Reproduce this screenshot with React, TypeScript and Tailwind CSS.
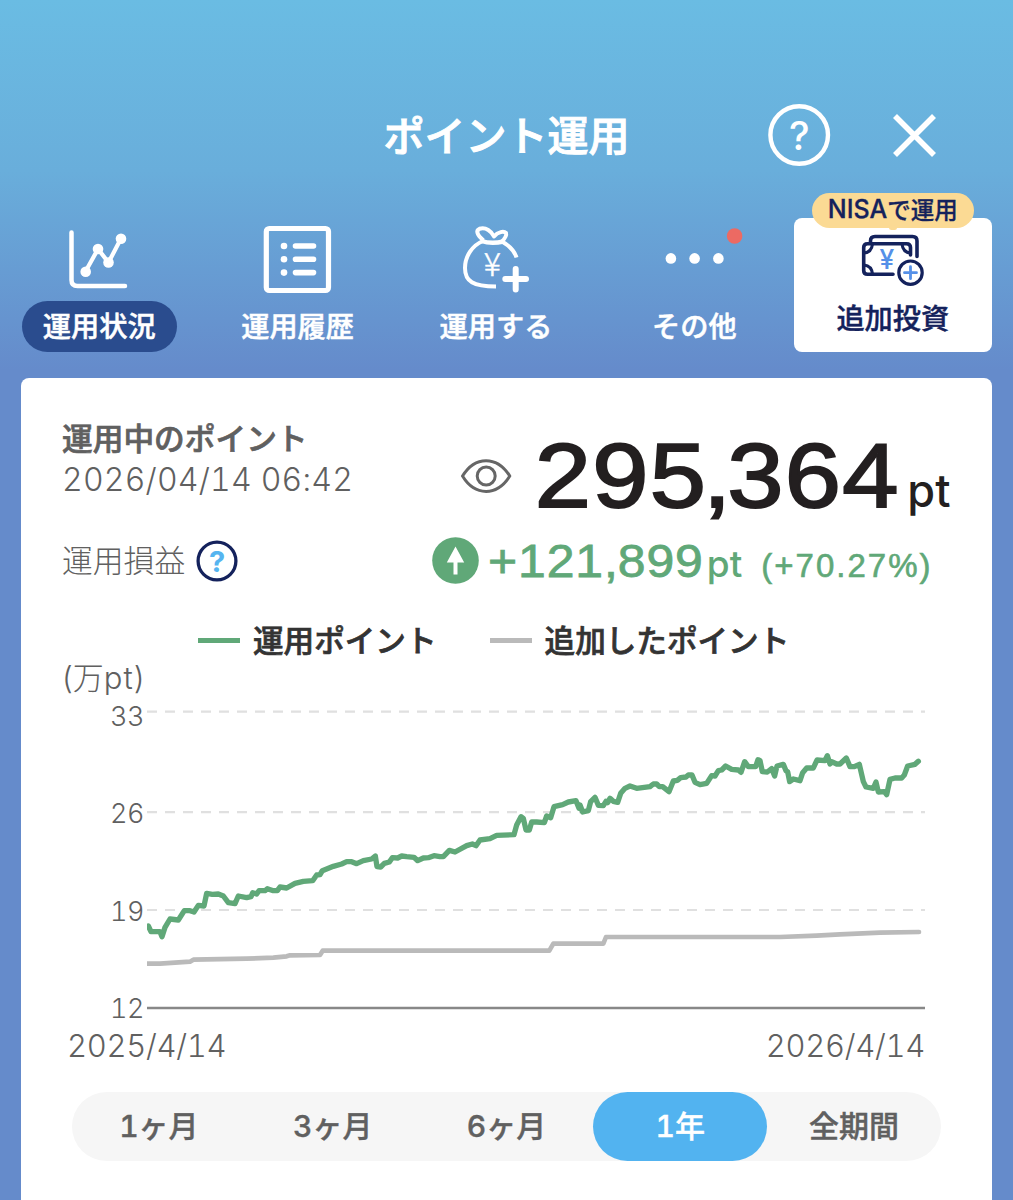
import React, { useState } from 'react';

interface NavItem {
  label: string;
  icon: React.ReactNode;
}

const ChartIcon = () => (
  <svg width="70" height="72" viewBox="64 224 70 72" fill="none" stroke="#fff" strokeLinecap="round" strokeLinejoin="round">
    <path d="M71.5 232.5V280Q71.5 286 77.5 286H125" strokeWidth="4.5" />
    <path d="M85.5 271.5L98 249L108.5 262.5L121 238.5" strokeWidth="4.2" />
    <g fill="#fff" stroke="none">
      <circle cx="85.7" cy="271.7" r="5.3" />
      <circle cx="98" cy="249" r="5.3" />
      <circle cx="108.5" cy="262.5" r="5.3" />
      <circle cx="121" cy="238.7" r="5.3" />
    </g>
  </svg>
);

const HistoryIcon = () => (
  <svg width="72" height="72" viewBox="262 224 72 72" fill="none" stroke="#fff" strokeLinecap="round">
    <rect x="266.3" y="228.5" width="62.2" height="62" rx="3" strokeWidth="5.2" />
    <path d="M295.5 246H313.5M295.5 259.3H313.5M295.5 272.6H313.5" strokeWidth="5.6" />
    <g fill="#fff" stroke="none">
      <circle cx="284" cy="246" r="3.3" />
      <circle cx="284" cy="259.3" r="3.3" />
      <circle cx="284" cy="272.6" r="3.3" />
    </g>
  </svg>
);

const BagIcon = () => (
  <svg width="72" height="72" viewBox="460 224 72 72" fill="none" stroke="#fff" strokeWidth="4">
    <path d="M483.5 240.5C477 235 475.5 230.5 479.5 228.8C486 227 491.5 231 494 236.5C498 231.5 504 231 506 233C507 236 503.5 240 501.5 242" strokeLinejoin="round" />
    <path d="M481.5 241C488 243.3 496 243.3 503.5 241.5" strokeWidth="4.5" />
    <path d="M483 241C472 245.5 465 256.5 465 268C465 281.5 473 286.5 496 286.5" />
    <path d="M502 241.5C509 245.5 514.5 251 516.5 257.5" />
    <path d="M515.7 269V289.5M505.3 279H526" strokeWidth="6" strokeLinecap="round" />
    <text x="492.3" y="275.7" textAnchor="middle" fill="#fff" stroke="#fff" strokeWidth="0.5" fontSize="32" fontWeight="300" fontFamily="Noto Sans CJK JP, sans-serif">¥</text>
  </svg>
);

const MoreIcon = () => (
  <svg width="84" height="72" viewBox="652.4 224 84 72" fill="#fff" className="overflow-visible">
    <circle cx="671.3" cy="258.4" r="5.3" />
    <circle cx="695" cy="258.4" r="5.3" />
    <circle cx="718.8" cy="258.4" r="5.3" />
    <circle cx="735" cy="236" r="7.8" fill="#ec6a63" />
  </svg>
);

const CashIcon = () => (
  <svg width="66" height="56" viewBox="860 232 66 56" fill="none" stroke="#14225c" strokeWidth="3.6" strokeLinecap="round">
    <path d="M870.5 243V241Q870.5 236.5 875 236.5H912.5Q917 236.5 917 241V256.5" />
    <path d="M893 274.3H867.5Q863.7 274.3 863.7 270.5V247.5Q863.7 243.7 867.5 243.7H906.5Q910.5 243.7 910.5 247.5V255" />
    <path d="M864 253C869 252.5 872 249 872.5 244M864 265C869 265.5 872 269 872.5 274M902 244C902.5 249 905 252.5 910.5 253" strokeWidth="3" />
    <circle cx="910.5" cy="272.7" r="11.7" strokeWidth="3.2" fill="#fff" />
    <path d="M904.5 272.7H916.5M910.5 266.7V278.7" stroke="#5590e8" strokeWidth="2.8" />
    <text x="887" y="268.7" textAnchor="middle" fill="#5590e8" stroke="none" fontSize="26.5" fontWeight="500" fontFamily="Inter, sans-serif">¥</text>
  </svg>
);

const NAV_ITEMS: NavItem[] = [
  { label: '運用状況', icon: <ChartIcon /> },
  { label: '運用履歴', icon: <HistoryIcon /> },
  { label: '運用する', icon: <BagIcon /> },
  { label: 'その他', icon: <MoreIcon /> },
];

const PERIODS = ['1ヶ月', '3ヶ月', '6ヶ月', '1年', '全期間'];

const POINTS_LINE =
  '25,708 33,725 60,725 66,740 75,712 90,687 115,690 133,662 150,662 162,666 175,646 192,648 200,610 217,613 235,612 250,618 265,638 285,641 295,618 320,623 333,620 338,608 350,612 357,602 375,602 382,596 400,602 412,602 420,591 440,594 465,580 490,574 518,572 530,555 540,554 547,542 580,529 605,522 620,515 635,515 650,521 670,512 695,507 706,498 711,530 722,531 733,520 748,516 757,503 773,504 785,498 800,500 822,502 833,512 850,504 865,503 882,497 900,500 910,500 928,481 945,486 980,467 997,462 1008,467 1020,450 1050,446 1070,436 1122,434 1130,405 1143,380 1150,385 1158,420 1168,420 1175,396 1190,396 1213,398 1220,378 1232,383 1242,350 1268,344 1285,336 1308,332 1317,355 1320,345 1328,366 1345,362 1352,335 1365,322 1375,346 1390,347 1398,334 1403,338 1410,325 1420,334 1433,337 1442,310 1455,295 1470,288 1490,295 1530,290 1540,282 1550,282 1558,290 1568,290 1587,305 1600,273 1612,271 1622,263 1638,261 1645,255 1656,255 1665,277 1680,284 1700,280 1715,257 1725,258 1735,242 1745,240 1757,228 1775,238 1795,240 1803,247 1814,215 1825,230 1847,230 1854,209 1860,212 1867,245 1882,246 1895,236 1904,258 1911,228 1930,223 1938,242 1943,245 1949,275 1960,267 1980,272 1988,248 2000,234 2020,234 2031,210 2055,212 2062,197 2070,222 2075,215 2090,222 2100,222 2119,204 2130,230 2143,230 2158,223 2170,275 2178,291 2200,295 2208,276 2215,306 2233,305 2240,314 2250,268 2265,264 2285,264 2293,255 2303,228 2325,223 2335,214';

const ADDED_LINE =
  '21,821 60,821 150,815 160,809 320,806 400,803 440,799 450,796 540,795 548,782 1228,782 1240,761 1390,761 1398,741 1920,741 2030,737 2100,733 2220,728 2337,726';

const PointChart = () => (
  <div className="flex h-[321px]">
    <div className="flex w-[84px] flex-col justify-between pt-px pr-[2px] text-right font-[Inter] text-[27px] leading-[28px] font-light tracking-[-0.5px] text-[#606060] tabular-nums">
      <span>33</span>
      <span>26</span>
      <span>19</span>
      <span>12</span>
    </div>
    <svg width="778" height="321" viewBox="21 36 2334 963" fill="none" className="ml-px">
      <path d="M21 65H2355M21 366.5H2355M21 660H2355" stroke="#e0e0e0" strokeWidth="6.5" strokeDasharray="30 24" />
      <path d="M21 954H2355" stroke="#888" strokeWidth="7" />
      <polyline points={ADDED_LINE} stroke="#bababa" strokeWidth="14" strokeLinejoin="round" strokeLinecap="round" />
      <polyline points={POINTS_LINE} stroke="#60a878" strokeWidth="16" strokeLinejoin="round" strokeLinecap="round" />
    </svg>
  </div>
);

const App: React.FC = () => {
  const [period, setPeriod] = useState('1年');
  const [active, setActive] = useState('運用状況');

  return (
    <div className="h-[1200px] w-[1013px] overflow-hidden bg-[#668aca] bg-[linear-gradient(180deg,#6abce3_0px,#69aedb_170px,#658bcb_370px)] bg-no-repeat font-['Noto_Sans_CJK_JP',sans-serif]">
      <header className="relative flex h-[192px] items-end justify-center pb-[28px]">
        <h1 className="flex h-[60px] items-center text-[41px] font-medium text-white [-webkit-text-stroke:1px]">ポイント運用</h1>
        <button className="absolute top-[104px] left-[767px]">
          <svg width="64" height="62" viewBox="767 104 64 62">
            <circle cx="799.2" cy="135" r="28.8" fill="none" stroke="#fff" strokeWidth="4.4" />
            <text x="799.2" y="149.5" textAnchor="middle" fill="#fff" fontSize="39" fontWeight="500" fontFamily="Inter, sans-serif">?</text>
          </svg>
        </button>
        <button className="absolute top-[110px] left-[889px]">
          <svg width="50" height="50" viewBox="889 110 50 50" stroke="#fff" strokeWidth="5.6">
            <path d="M895 116L934 155M934 116L895 155" />
          </svg>
        </button>
      </header>

      <nav className="grid h-[186px] w-[992px] grid-cols-5">
        {NAV_ITEMS.map(item => (
          <button key={item.label} onClick={() => setActive(item.label)} className="flex flex-col items-center pt-8">
            {item.icon}
            <span
              className={`mt-[5px] flex h-[51px] items-center rounded-full px-[21px] pb-[2px] text-[28.2px] font-medium text-white [-webkit-text-stroke:0.5px] ${
                item.label === active ? 'bg-[#2a4c8e]' : ''
              }`}
            >
              {item.label}
            </span>
          </button>
        ))}
        <button className="relative mt-[26px] flex h-[134px] flex-col items-center rounded-lg bg-white pt-[14px] text-[#14225c]">
          <span className="absolute -top-[25px] flex h-[35px] w-[162px] items-center justify-center rounded-full bg-[#fbda94] pb-px text-[23.5px] font-medium [-webkit-text-stroke:0.3px]">
            <span className="font-[Inter] text-[25px]">NISA</span>で運用
            <span className="absolute -bottom-[2px] h-[5px] w-[8px] rounded-full bg-[#fbda94]" />
          </span>
          <CashIcon />
          <span className="mt-[8px] text-[28.2px] leading-[42px] font-medium [-webkit-text-stroke:0.4px]">追加投資</span>
        </button>
      </nav>

      <main className="ml-[20.5px] h-[830px] w-[971.5px] rounded-t-lg bg-white px-[41.5px] pt-[38px] text-[#606060]">
        <section className="flex h-[106px] justify-between">
          <div>
            <h2 className="text-[30.7px] leading-[42px] font-medium [-webkit-text-stroke:0.7px]">運用中のポイント</h2>
            <p className="mt-[2px] font-[Inter] text-[32px] leading-[40px] font-light tracking-[0.2px] whitespace-nowrap tabular-nums">2026/04/14 06:42</p>
          </div>
          <div className="flex items-baseline pt-[5px] text-[#231f20]">
            <svg width="54" height="40" viewBox="458 456.5 54 40" fill="none" stroke="#666" strokeWidth="3" className="mr-[58px] -mb-[2px] translate-y-[-11px]">
              <path d="M461.5 476.5C474 456 496 456 508.8 476.5C496 497 474 497 461.5 476.5Z" strokeLinejoin="round" />
              <ellipse cx="485.2" cy="476.5" rx="9" ry="9" />
            </svg>
            <span className="origin-right scale-x-[1.11] font-['Liberation_Sans'] text-[91px] leading-[110px] tracking-[1.2px] [-webkit-text-stroke:2px]">
              29<span className="tracking-[-2.8px]">5</span>
              <span className="tracking-[-3.4px]">,</span>364
            </span>
            <span className="ml-[8px] font-[Inter] text-[45px] font-medium">pt</span>
          </div>
        </section>

        <section className="flex h-[78px] items-center justify-between pb-px">
          <div className="flex items-center">
            <span className="-mt-[2px] text-[30.8px] font-light">運用損益</span>
            <svg width="42" height="42" viewBox="195.5 539.5 42 42" className="ml-[11px]">
              <circle cx="216.5" cy="560.5" r="18.9" fill="none" stroke="#14225c" strokeWidth="3.3" />
              <text x="216.5" y="571" textAnchor="middle" fill="#56b4f0" fontSize="29" fontWeight="700" fontFamily="Inter, sans-serif">?</text>
            </svg>
          </div>
          <div className="mr-[18px] flex items-center text-[#60a878]">
            <svg width="47" height="47" viewBox="431.5 537.5 47 47" fill="#60a878">
              <circle cx="455" cy="561" r="23.3" />
              <path d="M455 547L463.7 563H457V575H453V563H446.3Z" fill="#fff" />
            </svg>
            <div className="ml-[9px] flex items-baseline pt-[6px] font-['Liberation_Sans']">
              <span className="mr-[20px] origin-left scale-x-[1.085] text-[46px] leading-[50px] tracking-[0.8px] [-webkit-text-stroke:0.8px]">
                +121<span className="tracking-[0px]">,</span>899
              </span>
              <span className="font-[Inter] text-[37px] font-medium">pt</span>
              <span className="ml-[19px] text-[33px] tracking-[2px] [-webkit-text-stroke:0.6px]">(+70.27%)</span>
            </div>
          </div>
        </section>

        <div className="mt-[19px] ml-[136px] flex h-[42px] items-center text-[30.6px] leading-[44px] font-medium text-[#333]">
          <span className="h-[5px] w-[42px] bg-[#60a878]" />
          <span className="-mt-[3px] ml-[13px] [-webkit-text-stroke:0.7px]">運用ポイント</span>
          <span className="ml-[53px] h-[5px] w-[42px] bg-[#bababa]" />
          <span className="-mt-[3px] ml-[13px] [-webkit-text-stroke:0.7px]">追加したポイント</span>
        </div>
        <p className="h-[41px] text-[31px] leading-[30px] font-light">
          <span className="font-[Inter]">(</span>万<span className="font-[Inter] tracking-[1px]">pt)</span>
        </p>

        <PointChart />
        <div className="ml-[5px] flex w-[858px] justify-between font-[Inter] text-[31px] leading-[45px] font-light tracking-[-0.3px] tabular-nums">
          <span>2025/4/14</span>
          <span>2026/4/14</span>
        </div>

        <div className="mt-[24px] ml-[10px] flex h-[69px] w-[869px] rounded-full bg-[#f6f6f6]">
          {PERIODS.map(p => (
            <button
              key={p}
              onClick={() => setPeriod(p)}
              className={`flex-1 rounded-full pb-px font-['Inter','Noto_Sans_CJK_JP',sans-serif] text-[30px] font-medium [-webkit-text-stroke:0.4px] tabular-nums ${p === period ? 'bg-[#52b3f0] text-white' : ''}`}
            >
              {p}
            </button>
          ))}
        </div>
      </main>
    </div>
  );
};

export default App;
